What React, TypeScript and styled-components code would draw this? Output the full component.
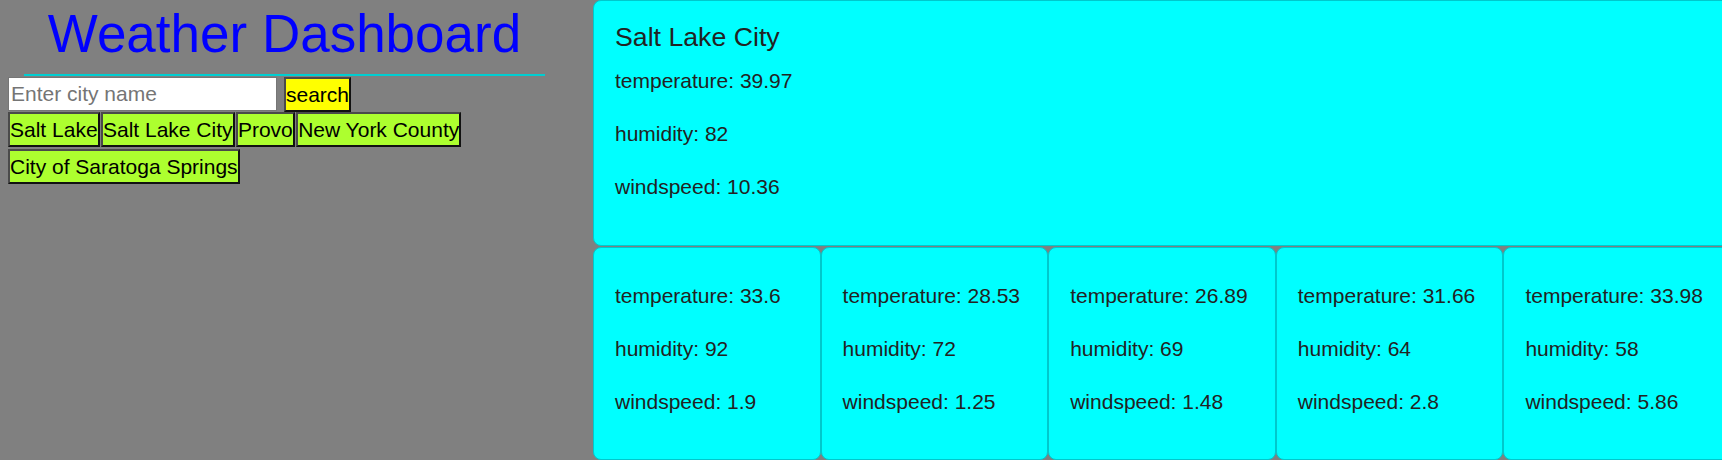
import styled, { createGlobalStyle } from 'styled-components';

const GlobalStyle = createGlobalStyle`
  html,
  body {
    margin: 0;
    padding: 0;
    background-color: #808080;
    font-family: 'Liberation Sans', Arial, sans-serif;
    overflow: hidden;
  }
`;

const Page = styled.div`
  display: flex;
  align-items: flex-start;
  padding-left: 8px;
  width: max-content;
`;

const Sidebar = styled.aside`
  width: 553px;
  flex-shrink: 0;
`;

const Title = styled.h1`
  margin: 3px 16px 0;
  padding-bottom: 10px;
  font-size: 53px;
  font-weight: 400;
  line-height: normal;
  color: #0000ff;
  text-align: center;
  border-bottom: 2px solid #00ced1;
`;

const SearchRow = styled.form`
  display: flex;
  align-items: flex-start;
  gap: 7px;
  margin: 1px 0 0;
`;

const SearchInput = styled.input`
  box-sizing: border-box;
  width: 269px;
  height: 34px;
  margin: 0;
  padding: 1px 2px;
  border: 1px solid #767676;
  background: #ffffff;
  font-family: inherit;
  font-size: 21px;
  color: #000;
  outline: none;

  &::placeholder {
    color: #757575;
  }
`;

const Button = styled.button<{ $bg: string }>`
  box-sizing: border-box;
  height: 35px;
  margin: 0;
  padding: 0;
  border: 2px solid;
  border-color: #4a4a4a #111 #111 #4a4a4a;
  background-color: ${p => p.$bg};
  color: #000;
  font-family: inherit;
  font-size: 21px;
  line-height: 31px;
  cursor: pointer;
`;

const CityList = styled.div`
  display: flex;
  flex-wrap: wrap;
  align-items: flex-start;
  gap: 2px 1.4px;
`;

const Main = styled.main`
  width: 1138px;
  flex-shrink: 0;
  margin-left: 32px;
  display: flex;
  flex-direction: column;
`;

const Card = styled.section`
  box-sizing: border-box;
  background-color: #00ffff;
  border: 1px solid #00c8cc;
  border-radius: 8px;
  padding: 0 21px;
  color: #222;
`;

const CurrentCard = styled(Card)`
  height: 246px;
  padding-top: 21px;
`;

const CityName = styled.h2`
  margin: 0;
  font-size: 26.7px;
  font-weight: 400;
  line-height: normal;
`;

const StatList = styled.div<{ $offset: number }>`
  display: flex;
  flex-direction: column;
  gap: 21.5px;
  margin-top: ${p => p.$offset}px;
`;

const Stat = styled.p`
  margin: 0;
  font-size: 21px;
  line-height: 31.5px;
  white-space: nowrap;
`;

const ForecastRow = styled.div`
  display: flex;
  margin-top: 1px;
`;

const ForecastCard = styled(Card)`
  flex: 1;
  height: 213px;
  padding-top: 32px;
`;

type Weather = {
  temperature: number;
  humidity: number;
  windspeed: number;
};

const cities = ['Salt Lake', 'Salt Lake City', 'Provo', 'New York County', 'City of Saratoga Springs'];

const current: Weather = { temperature: 39.97, humidity: 82, windspeed: 10.36 };

const forecast: Weather[] = [
  { temperature: 33.6, humidity: 92, windspeed: 1.9 },
  { temperature: 28.53, humidity: 72, windspeed: 1.25 },
  { temperature: 26.89, humidity: 69, windspeed: 1.48 },
  { temperature: 31.66, humidity: 64, windspeed: 2.8 },
  { temperature: 33.98, humidity: 58, windspeed: 5.86 },
];

const Stats = ({ data, offset }: { data: Weather; offset: number }) => (
  <StatList $offset={offset}>
    <Stat>temperature: {data.temperature}</Stat>
    <Stat>humidity: {data.humidity}</Stat>
    <Stat>windspeed: {data.windspeed}</Stat>
  </StatList>
);

const App = () => {
  return (
    <>
      <GlobalStyle />
      <Page>
        <Sidebar>
          <Title>Weather Dashboard</Title>
          <SearchRow onSubmit={e => e.preventDefault()}>
            <SearchInput type="text" placeholder="Enter city name" />
            <Button $bg="#ffff00" type="submit">
              search
            </Button>
          </SearchRow>
          <CityList>
            {cities.map(city => (
              <Button key={city} $bg="#adff2f" type="button">
                {city}
              </Button>
            ))}
          </CityList>
        </Sidebar>
        <Main>
          <CurrentCard>
            <CityName>Salt Lake City</CityName>
            <Stats data={current} offset={11.6} />
          </CurrentCard>
          <ForecastRow>
            {forecast.map((day, i) => (
              <ForecastCard key={i}>
                <Stats data={day} offset={0} />
              </ForecastCard>
            ))}
          </ForecastRow>
        </Main>
      </Page>
    </>
  );
};

export default App;
